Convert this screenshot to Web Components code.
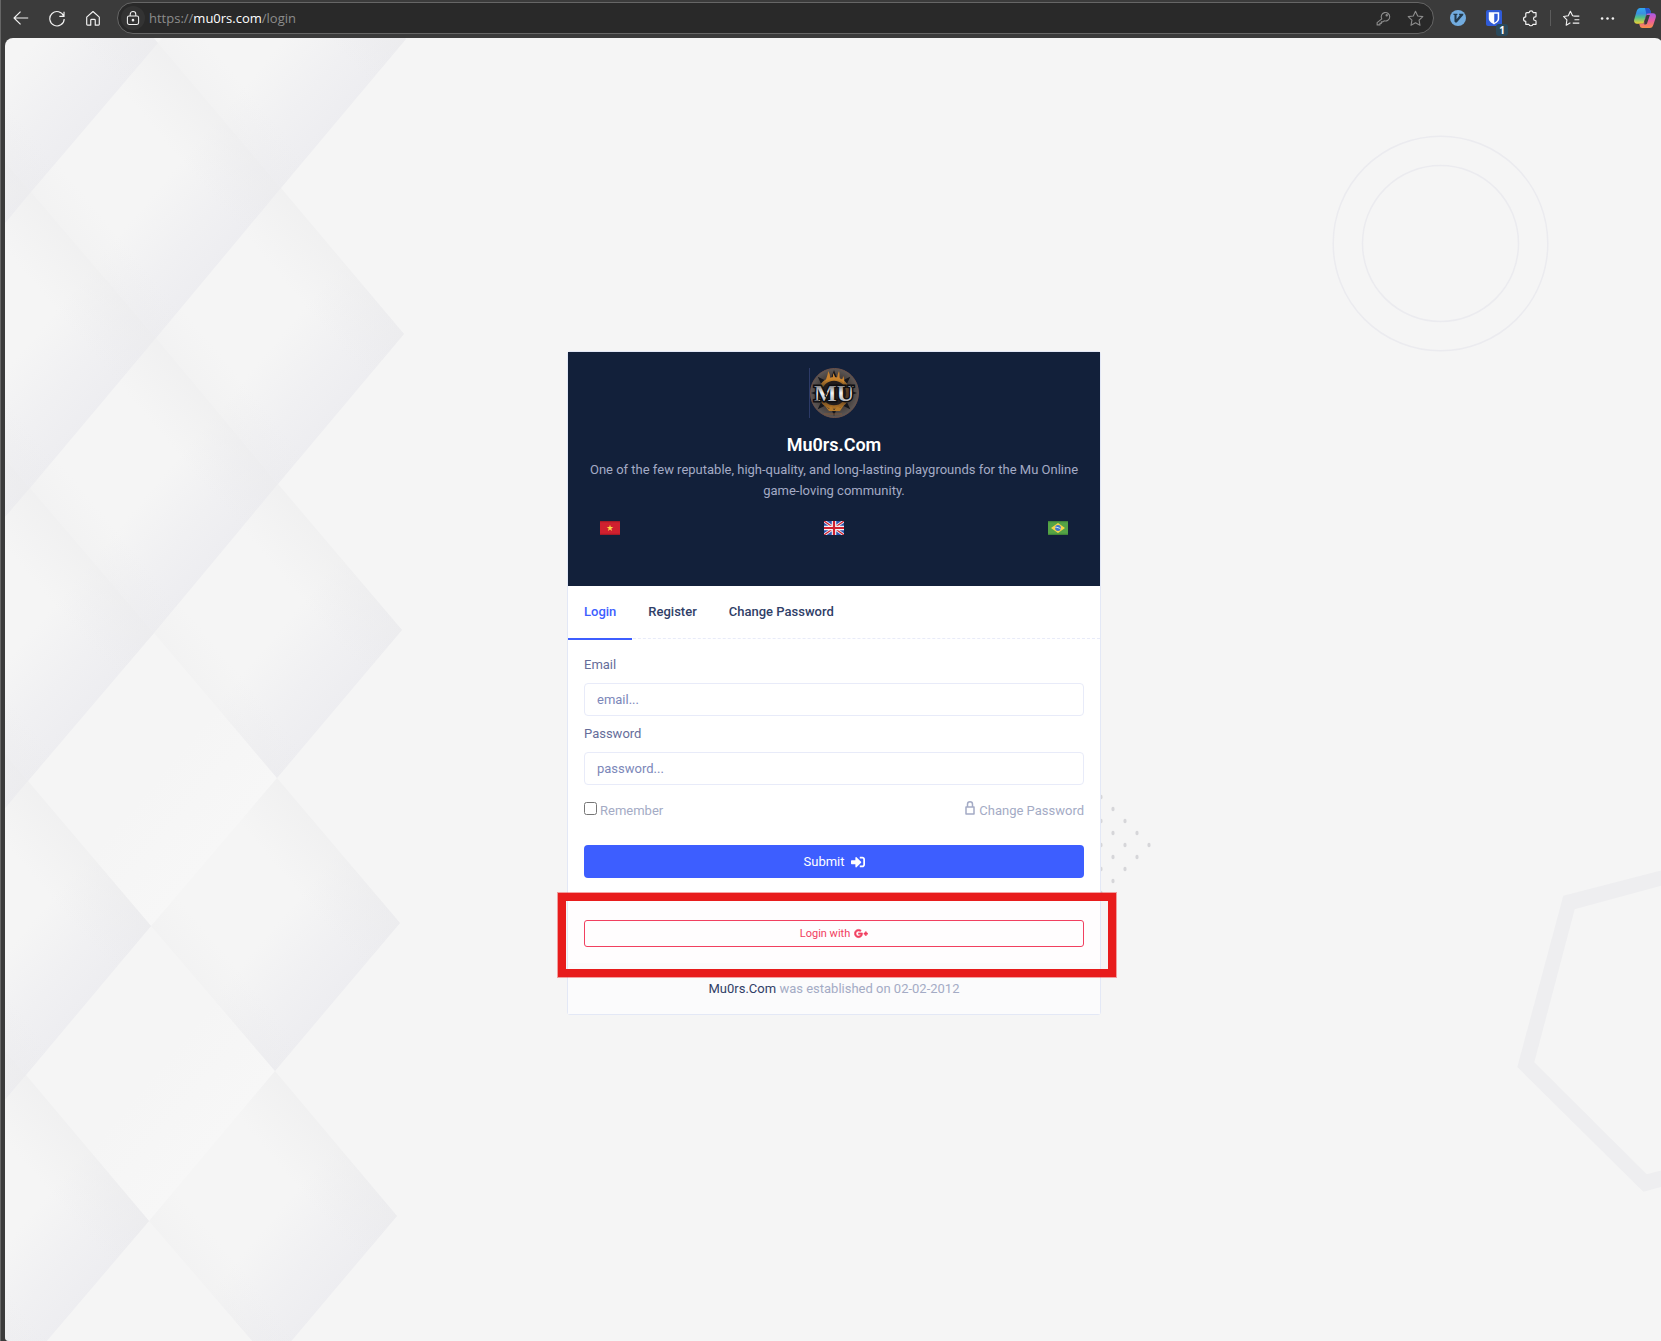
<!DOCTYPE html>
<html lang="en">
<head>
<meta charset="utf-8">
<meta name="viewport" content="width=device-width, initial-scale=1">
<title>Mu0rs.Com - Login</title>
<style>
  html, body { margin: 0; }
  body {
    --blue: #3d5eff;
    --navy: #12203a;
    --ink: #303e67;
    --muted: #a4abc5;
    --label: #656d9a;
    --line: #e8ebf9;
    --red: #f14060;
    min-height: 100vh;
    overflow: hidden;
    background: #3b3b3b;
    font: 400 13px/20px Roboto, "Liberation Sans", sans-serif;
  }
</style>
</head>
<body>
<app-window>
  <browser-toolbar slot="toolbar" scheme="https://" host="mu0rs.com" path="/login"></browser-toolbar>
  <login-card>
    <card-header slot="header" title-text="Mu0rs.Com">
      One of the few reputable, high-quality, and long-lasting playgrounds for the Mu Online game-loving community.
    </card-header>
    <tab-strip slot="tabs" items="Login,Register,Change Password" active="0"></tab-strip>
    <login-form slot="form"></login-form>
    <social-login slot="social"></social-login>
    <card-footer slot="footer" brand="Mu0rs.Com">was established on 02-02-2012</card-footer>
  </login-card>
</app-window>

<script>
const ICONS = {
  back: ['0 0 20 20', '<path d="M18 10H2.5M9.5 3 2.3 10l7.200 7" />'],
  reload: ['0 0 20 20', '<path d="M17.500 8A8 8 0 1 0 18 11M17.800 3v5.200h-5.200" />'],
  home: ['0 0 20 20', '<path d="M3 9 10 2.800 17 9v8a1 1 0 0 1-1 1h-3.500v-5.500a1 1 0 0 0-1-1h-3a1 1 0 0 0-1 1V18H4a1 1 0 0 1-1-1z" />'],
  lock: ['0 0 20 20', '<rect x="3" y="7.500" width="14" height="10.500" rx="2"/><path d="M6.500 7.500V5.500a3.500 3.500 0 0 1 7 0v2"/><circle cx="10" cy="12.700" r="1" fill="currentColor"/>'],
  key: ['0 0 20 20', '<path d="M8 10.500a5 5 0 1 1 2.700 2.200L9.200 14H7.500v1.700H5.800v1.800H2.500v-2.700z"/><circle cx="13.800" cy="6.200" r=".8"/>'],
  star: ['0 0 20 20', '<path d="m10 1.500 2.600 5.500 6 .8-4.400 4.200 1.100 6-5.300-2.900L4.700 18l1.100-6L1.400 7.800l6-.8z"/>'],
  puzzle: ['0 0 20 20', '<path d="M6.500 4H9a2.300 2.300 0 0 1 4.500 0h3.200v4a.8.8 0 0 1-.8.8 2 2 0 0 0 0 4 .8.800 0 0 1 .8.8V17h-3.500a2.300 2.300 0 0 1-4.400 0H5.300v-3.300a2.500 2.500 0 0 1 0-5V5.200A1.200 1.200 0 0 1 6.500 4z"/>'],
  favorites: ['0 0 20 20', '<path d="M12.300 7.200h6.900M13.500 11.500h5.700M11.500 15.500h7.700M14 7 11.300 6.700 8.700 1.500 6.200 6.800.6 7.600l4 4-.9 6.300 5-2.800"/>'],
  more: ['0 0 20 20', '<g fill="currentColor" stroke="none"><circle cx="2.800" cy="10" r="1.700"/><circle cx="10" cy="10" r="1.700"/><circle cx="17.200" cy="10" r="1.700"/></g>'],
  vimium: ['0 0 20 20', '<g stroke="none"><circle cx="10" cy="10" r="10" fill="#72acdf"/><path d="M4.200 4.700h5v1.400l-1 .3v5.200l4.200-5.200-1-.3V4.700h5.200v1.600l-8.200 9.200H6.600l-1-1V6.300l-1.400-.3z" fill="#233a4c"/></g>'],
  bitwarden: ['0 0 20 20', '<g stroke="none"><rect width="20" height="20" rx="2.500" fill="#2f5bd8"/><path d="M3.500 2.700h13V11c0 3-3.500 5.500-6.500 7-3-1.500-6.500-4-6.500-7z" fill="#fff"/><path d="M10.300 4.600h4.300v6.300c0 2-2 3.600-4.300 5z" fill="#2f5bd8"/></g>'],
  copilot: ['0 0 22 20', `
    <defs>
      <linearGradient id="a" x1="0" y1="0" x2="0" y2="1"><stop offset="0" stop-color="#31a8ee"/><stop offset=".35" stop-color="#3b8fe0"/><stop offset=".6" stop-color="#4fc08a"/><stop offset="1" stop-color="#f0d232"/></linearGradient>
      <linearGradient id="b" x1="0" y1="0" x2="0" y2="1"><stop offset="0" stop-color="#a45be8"/><stop offset=".5" stop-color="#e85aa0"/><stop offset="1" stop-color="#fa9048"/></linearGradient>
    </defs>
    <g stroke="none">
      <path d="M6.300 0h7.200c1.600 0 2.300 1 2.700 2.300l.9 2.900h-2c-1.600 0-2.600.8-3.100 2.400L10 14.200c-.4 1-1 1.500-2.200 1.500H3c-2.600 0-3.400-2-2.700-4.500L2.600 3.300C3.200 1.300 4.300 0 6.300 0z" fill="url(#a)"/>
      <path d="M11 0h2.500c1.600 0 2.300 1 2.700 2.300l.9 2.900h-2c-1.200 0-2 .4-2.600 1.400z" fill="#2454d0"/>
      <path d="M15.700 20H8.500c-1.600 0-2.300-1-2.700-2.300l-.6-2h2.700c1.200 0 1.800-.5 2.200-1.500L12 7.600c.5-1.600 1.500-2.400 3.100-2.400H19c2.600 0 3.400 2 2.700 4.500l-2.300 7c-.6 2-1.700 3.300-3.700 3.300z" fill="url(#b)"/>
      <path d="m10.300 13.600 2.200-6.700h3.400l-2.800 8.300c-.4 1-1.500 1.300-2.800 1.300z" fill="#3b3b3b"/>
    </g>`],
  padlock: ['0 0 10 14', '<path stroke-width="1.500" d="M1 6h8v7H1zM2.500 6V3.300a2.500 2.500 0 0 1 5 0V6"/>'],
  signin: ['0 0 512 512', '<path fill="currentColor" stroke="none" d="M416 448h-84c-6.600 0-12-5.400-12-12v-40c0-6.600 5.400-12 12-12h84c17.700 0 32-14.300 32-32V160c0-17.700-14.300-32-32-32h-84c-6.600 0-12-5.400-12-12V76c0-6.600 5.400-12 12-12h84c53 0 96 43 96 96v192c0 53-43 96-96 96zm-47-201L201 79c-15-15-41-4.500-41 17v96H24c-13.300 0-24 10.700-24 24v96c0 13.300 10.700 24 24 24h136v96c0 21.500 26 32 41 17l168-168c9.300-9.400 9.300-24.600 0-34z"/>'],
  gplus: ['0 0 640 512', '<path fill="currentColor" stroke-width="28" d="M386.061 228.496c1.834 9.692 3.143 19.384 3.143 31.956C389.204 370.205 315.599 448 204.800 448c-106.084 0-192-85.915-192-192s85.916-192 192-192c51.864 0 95.083 18.859 128.611 50.292l-52.126 50.030c-14.145-13.621-39.028-29.599-76.485-29.599-65.484 0-118.920 54.221-118.920 121.277 0 67.056 53.436 121.277 118.920 121.277 75.961 0 104.513-54.745 108.965-82.773H204.800v-66.009h181.261zm185.406 6.437V179.200h-56.001v55.733h-55.733v56.001h55.733v55.733h56.001v-55.733H627.200v-56.001h-55.733z"/>'],
  vn: ['0 0 20 14', '<g stroke="none"><path fill="#d0202f" d="M0 0h20v14H0z"/><path fill="#f9d548" d="m10 3.700.8 2.400h2.500l-2 1.500.8 2.400-2.100-1.500L7.900 10l.8-2.400-2-1.500h2.500z"/></g><path stroke="#a81a26" d="M0 .5h20M0 13.500h20"/>'],
  gb: ['0 0 20 14', '<path fill="#2a55b0" stroke="none" d="M0 0h20v14H0z"/><path stroke="#f1f1f4" stroke-width="3" d="m0 0 20 14M20 0 0 14"/><path stroke="#d0202f" d="m0 0 20 14M20 0 0 14"/><path stroke="#f1f1f4" stroke-width="4.500" d="M10 0v14M0 7h20"/><path stroke="#d0202f" stroke-width="2.200" d="M10 0v14M0 7h20"/>'],
  br: ['0 0 20 14', '<g stroke="none"><path fill="#55a446" d="M0 0h20v14H0z"/><path fill="#f9d548" d="m10 2 7 5-7 5-7-5z"/><circle cx="10" cy="7" r="2.900" fill="#3f77c9"/></g><path stroke="#e8f0f4" stroke-width=".9" d="M7.300 6.200c2 0 4 .6 5.400 1.900"/><path stroke="#41853a" d="M0 .5h20M0 13.500h20"/>']
};

class UiIcon extends HTMLElement {
  connectedCallback() {
    const [box, shape] = ICONS[this.getAttribute('name')];
    const w = this.getAttribute('w') || 18;
    const h = this.getAttribute('h') || w;
    this.attachShadow({ mode: 'open' });
    this.shadowRoot.innerHTML = `
      <style>
        :host { display: inline-block; line-height: 0; }
        svg { fill: none; stroke: currentColor; stroke-linejoin: round; }
      </style>
      <svg width="${w}" height="${h}" viewBox="${box}" stroke-width="1.300" aria-hidden="true">${shape}</svg>
    `;
  }
}
customElements.define('ui-icon', UiIcon);

class AppWindow extends HTMLElement {
  connectedCallback() {
    this.attachShadow({ mode: 'open' });
    this.shadowRoot.innerHTML = `
      <style>
        :host {
          display: flex;
          flex-direction: column;
          min-height: 100vh;
          margin-right: -2px;
          box-sizing: border-box;
          border-left: 1px solid #666;
        }
        main {
          position: relative;
          flex: 1;
          display: flex;
          align-items: center;
          justify-content: center;
          margin-left: 4px;
          padding-bottom: 14px;
          overflow: hidden;
          border-radius: 8px 8px 0 4px;
          background: #f5f5f5;
        }
      </style>
      <slot name="toolbar"></slot>
      <main>
        <page-backdrop></page-backdrop>
        <slot></slot>
      </main>
    `;
  }
}
customElements.define('app-window', AppWindow);

class BrowserToolbar extends HTMLElement {
  connectedCallback() {
    const part = name => this.getAttribute(name);
    this.attachShadow({ mode: 'open' });
    this.shadowRoot.innerHTML = `
      <style>
        :host {
          display: flex;
          align-items: center;
          padding: 2px 0 4px 2px;
          color: #f2f2f2;
        }
        button {
          position: relative;
          display: grid;
          place-items: center;
          width: 36px;
          height: 32px;
          padding: 0;
          border: 0;
          background: none;
          color: inherit;
        }
        .address {
          flex: 1;
          display: flex;
          align-items: center;
          box-sizing: border-box;
          height: 32px;
          margin: 0 6px;
          padding: 0 2px 0 3px;
          border: 1px solid #666;
          border-radius: 16px;
          background: #292929;
          color: #8c8c8c;
        }
        .address button { width: 32px; height: 30px; }
        .address .site {
          width: 24px;
          height: 24px;
          border-radius: 12px;
          background: #333;
          color: #f2f2f2;
        }
        .url {
          flex: 1;
          margin-left: 4px;
          font: 13px/20px "Open Sans", "Noto Sans", sans-serif;
        }
        .url b { font-weight: 400; color: #fff; }
        .sep { width: 1px; height: 16px; margin: 0 2px; background: #5c5c5c; }
        .badge {
          position: absolute;
          right: 4px;
          bottom: -2px;
          width: 12px;
          height: 12px;
          border-radius: 3px;
          background: #2b4a5c;
          color: #fff;
          font: 700 10px/12px "Open Sans", sans-serif;
        }
        .last { margin-left: 2px; }
      </style>
      <button aria-label="Back"><ui-icon name="back"></ui-icon></button>
      <button aria-label="Refresh"><ui-icon name="reload"></ui-icon></button>
      <button aria-label="Home"><ui-icon name="home"></ui-icon></button>
      <div class="address">
        <button class="site" aria-label="Site information"><ui-icon name="lock" w="16"></ui-icon></button>
        <span class="url">${part('scheme')}<b>${part('host')}</b>${part('path')}</span>
        <button aria-label="Saved passwords"><ui-icon name="key" w="17"></ui-icon></button>
        <button aria-label="Add to favorites"><ui-icon name="star" w="17"></ui-icon></button>
      </div>
      <button aria-label="Vimium"><ui-icon name="vimium" w="16"></ui-icon></button>
      <button aria-label="Bitwarden"><ui-icon name="bitwarden" w="16"></ui-icon><span class="badge">1</span></button>
      <button aria-label="Extensions"><ui-icon name="puzzle"></ui-icon></button>
      <span class="sep"></span>
      <button aria-label="Favorites"><ui-icon name="favorites" w="17"></ui-icon></button>
      <button aria-label="More"><ui-icon name="more" w="15"></ui-icon></button>
      <button class="last" aria-label="Copilot"><ui-icon name="copilot" w="22" h="20"></ui-icon></button>
    `;
  }
}
customElements.define('browser-toolbar', BrowserToolbar);

// Tiles are listed as top, right, bottom, left corners.
const TILES = [
  [283, -105, 406, 39, 281, 188, 158, 43],
  [33, -102, 158, 43, 31, 192, -94, 46],
  [-94, 46, 31, 192, -94, 342, -218, 196],
  [158, 43, 281, 188, 156, 338, 31, 192],
  [31, 192, 156, 338, 30, 488, -94, 342],
  [281, 188, 404, 334, 278, 484, 156, 338],
  [156, 338, 278, 484, 154, 633, 30, 488],
  [-94, 342, 30, 488, -96, 634, -218, 488],
  [30, 488, 154, 633, 28, 781, -96, 634],
  [278, 484, 402, 630, 277, 778, 154, 633],
  [-96, 634, 28, 781, -98, 930, -220, 781],
  [28, 781, 151, 926, 26, 1075, -98, 930],
  [277, 778, 400, 923, 275, 1071, 151, 926],
  [-98, 930, 26, 1075, -100, 1224, -222, 1075],
  [26, 1075, 149, 1221, 23, 1369, -100, 1224],
  [275, 1071, 397, 1216, 272, 1364, 149, 1221]
];
const PALE_TILES = [
  [154, 633, 277, 778, 151, 926, 28, 781],
  [151, 926, 275, 1071, 149, 1221, 26, 1075]
];
const DOTS = [
  [1101, 797], [1101, 821], [1101, 845], [1101, 869], [1101, 893],
  [1113, 809], [1113, 833], [1113, 857], [1113, 881],
  [1125, 821], [1125, 845], [1125, 869],
  [1137, 833], [1137, 857], [1149, 845]
];

class PageBackdrop extends HTMLElement {
  connectedCallback() {
    const tile = (pts, fill) => `<polygon points="${pts.join(' ')}" fill="url(#${fill})"/>`;
    this.attachShadow({ mode: 'open' });
    this.shadowRoot.innerHTML = `
      <style>
        :host { position: absolute; inset: 0; }
        svg { display: block; width: 100%; height: 100%; }
      </style>
      <svg viewBox="5 38 1658 1303" preserveAspectRatio="xMidYMid slice" aria-hidden="true">
        <defs>
          <linearGradient id="se" x1=".25" y1=".25" x2=".75" y2=".75">
            <stop offset=".5" stop-color="#e9e9ee" stop-opacity="0"/>
            <stop offset=".78" stop-color="#e9e9ee" stop-opacity=".4"/>
            <stop offset="1" stop-color="#e9e9ee" stop-opacity=".65"/>
          </linearGradient>
          <linearGradient id="ne" x1=".25" y1=".75" x2=".75" y2=".25">
            <stop offset="0" stop-color="#ebebec" stop-opacity=".25"/>
            <stop offset=".2" stop-color="#ebebec" stop-opacity="0"/>
            <stop offset=".7" stop-color="#ebebec" stop-opacity="0"/>
            <stop offset="1" stop-color="#ebebec" stop-opacity=".45"/>
          </linearGradient>
          <linearGradient id="pale" x1=".25" y1=".25" x2=".75" y2=".75">
            <stop offset=".5" stop-color="#f7f7f7" stop-opacity="0"/>
            <stop offset="1" stop-color="#f7f7f7"/>
          </linearGradient>
        </defs>
        ${PALE_TILES.map(t => tile(t, 'pale')).join('')}
        ${TILES.map(t => tile(t, 'se') + tile(t, 'ne')).join('')}
        <g fill="none" stroke="#ebebef" stroke-width="1.500">
          <circle cx="1440.500" cy="243.500" r="107.300"/>
          <circle cx="1440.500" cy="243.500" r="78"/>
        </g>
        <path fill="#eeeef0" d="M1690 863 1563.300 895.700 1517.300 1067 1643.300 1191.700 1690 1179V1163L1646.700 1174.300 1534.300 1062.300 1574.700 909.300 1690 878z"/>
        <g fill="#d6d6d9">${DOTS.map(([x, y]) => `<ellipse cx="${x}" cy="${y}" rx="1.600" ry="2.200"/>`).join('')}</g>
      </svg>
    `;
  }
}
customElements.define('page-backdrop', PageBackdrop);

class LoginCard extends HTMLElement {
  connectedCallback() {
    this.attachShadow({ mode: 'open' });
    this.shadowRoot.innerHTML = `
      <style>
        :host {
          position: relative;
          display: block;
          box-sizing: border-box;
          width: 100%;
          max-width: 534px;
          border: 1px solid #e3e8f6;
          border-radius: 3px;
          background: #fff;
        }
      </style>
      <slot name="header"></slot>
      <slot name="tabs"></slot>
      <slot name="form"></slot>
      <slot name="social"></slot>
      <slot name="footer"></slot>
    `;
  }
}
customElements.define('login-card', LoginCard);

class BrandLogo extends HTMLElement {
  connectedCallback() {
    const spikes = [0, 45, 90, 135, 180, 225, 270, 315]
      .map(a => `<path d="m22.500 9 2.500-7 2.500 7z" transform="rotate(${a} 25 25)"/>`).join('');
    this.attachShadow({ mode: 'open' });
    this.shadowRoot.innerHTML = `
      <style>
        :host { display: block; width: 50px; height: 50px; margin: 0 auto; }
        svg { display: block; }
        text { font: 700 24px "Liberation Serif", serif; }
      </style>
      <svg width="50" height="50" viewBox="0 0 50 50" role="img" aria-label="MU">
        <defs>
          <radialGradient id="disc"><stop offset="0" stop-color="#2b2320"/><stop offset=".7" stop-color="#47403e"/><stop offset="1" stop-color="#5d5856"/></radialGradient>
          <linearGradient id="fire" x1="0" y1="0" x2="0" y2="1"><stop offset="0" stop-color="#c9862c"/><stop offset=".35" stop-color="#5c3f22"/><stop offset=".7" stop-color="#4d3721"/><stop offset="1" stop-color="#a86e25"/></linearGradient>
          <linearGradient id="steel" x1="0" y1="0" x2="0" y2="1"><stop offset=".2" stop-color="#77797d"/><stop offset=".5" stop-color="#f4f4f6"/><stop offset=".9" stop-color="#a0a2a6"/></linearGradient>
        </defs>
        <path d="M.5 0v50" stroke="#2c3a67"/>
        <ellipse cx="25.500" cy="25" rx="24" ry="24.500" fill="url(#disc)" stroke="#6d5148"/>
        <g fill="#15161b">${spikes}</g>
        <circle cx="25" cy="25" r="14" fill="#211c1c" stroke="url(#fire)" stroke-width="3.500"/>
        <path d="M17 13c0-4 2-5 2-10 2 3 2 4 2 7l2 1c1-2 1-3 1-6 2 3 2 4 3 6 2-2 1-4 3-8 1 3 0 5 1 8 2 1 3 0 3-3 2 3 1 6 1 7-3-3-6-4-9-4s-6 0-9 2z" fill="#c98330"/>
        <path d="m16 38 4 3 2-3 3 4 3-3 3 1 4-3-4 6H20z" fill="#b3792a"/>
        <path d="M15 46h18" stroke="#7d563a"/>
        <text x="25" y="33" text-anchor="middle" fill="url(#steel)" stroke="#0d0d10" stroke-width="3" paint-order="stroke">MU</text>
        <path d="m14 19 4 6-2 3 3 3M5 33h5M41 17l3 3" fill="none" stroke="#1a1a1e" stroke-width="1.200"/>
      </svg>
    `;
  }
}
customElements.define('brand-logo', BrandLogo);

class CardHeader extends HTMLElement {
  connectedCallback() {
    this.attachShadow({ mode: 'open' });
    this.shadowRoot.innerHTML = `
      <style>
        :host {
          display: block;
          padding: 16px 16px 51px;
          background: var(--navy);
          color: var(--muted);
          text-align: center;
        }
        h1 {
          margin: 16px 0 3px;
          color: #fff;
          font-size: 18px;
          font-weight: 600;
          line-height: 22px;
        }
        p { margin: 0; line-height: 21px; }
        nav {
          display: flex;
          justify-content: space-between;
          margin: 20px 16px 0;
        }
        a { display: block; line-height: 0; }
      </style>
      <brand-logo></brand-logo>
      <h1>${this.getAttribute('title-text')}</h1>
      <p><slot></slot></p>
      <nav>
        <a href="#vi" aria-label="Tiếng Việt"><ui-icon name="vn" w="20" h="14"></ui-icon></a>
        <a href="#en" aria-label="English"><ui-icon name="gb" w="20" h="14"></ui-icon></a>
        <a href="#pt" aria-label="Português"><ui-icon name="br" w="20" h="14"></ui-icon></a>
      </nav>
    `;
  }
}
customElements.define('card-header', CardHeader);

class TabStrip extends HTMLElement {
  connectedCallback() {
    const active = Number(this.getAttribute('active'));
    const tabs = this.getAttribute('items').split(',').map((label, i) =>
      `<a href="#tab-${i}" class="${i === active ? 'active' : ''}">${label}</a>`);
    this.attachShadow({ mode: 'open' });
    this.shadowRoot.innerHTML = `
      <style>
        :host {
          display: flex;
          border-bottom: 1px dashed var(--line);
        }
        a {
          margin-bottom: -2px;
          padding: 16px;
          border-bottom: 2px solid transparent;
          color: var(--ink);
          font-weight: 500;
          text-decoration: none;
        }
        .active { color: var(--blue); border-color: var(--blue); }
      </style>
      ${tabs.join('')}
    `;
  }
}
customElements.define('tab-strip', TabStrip);

class FormField extends HTMLElement {
  connectedCallback() {
    this.attachShadow({ mode: 'open' });
    this.shadowRoot.innerHTML = `
      <style>
        :host { display: block; color: var(--label); }
        label { display: block; margin-bottom: 8px; }
        input {
          display: block;
          box-sizing: border-box;
          width: 100%;
          height: 33px;
          padding: 0 12px;
          border: 1px solid var(--line);
          border-radius: 4px;
          background: #fff;
          color: inherit;
          font: inherit;
        }
        input::placeholder { color: #7c87b9; opacity: 1; }
      </style>
      <label for="field">${this.getAttribute('label')}</label>
      <input id="field" type="${this.getAttribute('type')}" placeholder="${this.getAttribute('placeholder')}">
    `;
  }
}
customElements.define('form-field', FormField);

class LoginForm extends HTMLElement {
  connectedCallback() {
    this.attachShadow({ mode: 'open' });
    this.shadowRoot.innerHTML = `
      <style>
        :host { display: block; padding: 16px; }
        form { display: grid; gap: 8px; margin: 0; }
        .row {
          display: flex;
          justify-content: space-between;
          margin: 8px 0 16px;
          color: var(--muted);
        }
        .row label { display: flex; gap: 3px; }
        .row input { width: 13px; height: 13px; margin: 1px 0 0; }
        a { display: flex; gap: 4px; color: inherit; text-decoration: none; }
        button {
          display: flex;
          align-items: center;
          justify-content: center;
          gap: 6px;
          box-sizing: border-box;
          height: 33px;
          padding: 1px 0 0;
          border: 0;
          border-radius: 4px;
          background: var(--blue);
          color: #fff;
          font: inherit;
        }
      </style>
      <form>
        <form-field label="Email" type="email" placeholder="email..."></form-field>
        <form-field label="Password" type="password" placeholder="password..."></form-field>
        <div class="row">
          <label for="remember"><input id="remember" type="checkbox">Remember</label>
          <a href="#change"><ui-icon name="padlock" w="10" h="14"></ui-icon>Change Password</a>
        </div>
        <button type="submit">Submit <ui-icon name="signin" w="14"></ui-icon></button>
      </form>
    `;
  }
}
customElements.define('login-form', LoginForm);

class SocialLogin extends HTMLElement {
  connectedCallback() {
    this.attachShadow({ mode: 'open' });
    this.shadowRoot.innerHTML = `
      <style>
        :host {
          position: relative;
          display: block;
          padding: 26px 16px 16px;
          background: #fffdfe;
        }
        button {
          display: flex;
          align-items: center;
          justify-content: center;
          gap: 4px;
          box-sizing: border-box;
          width: 100%;
          height: 27px;
          padding: 1px 0 0;
          border: 1px solid var(--red);
          border-radius: 3px;
          background: #fffdfe;
          color: var(--red);
          font: inherit;
          font-size: 11px;
        }
        .highlight {
          position: absolute;
          z-index: 1;
          inset: -1px -16px -14px -10px;
          border: 8px solid #e81c1c;
          box-shadow: 0 0 0 1px rgba(232, 28, 28, .4);
          pointer-events: none;
        }
      </style>
      <button type="button">Login with <ui-icon name="gplus" w="14" h="11"></ui-icon></button>
      <div class="highlight"></div>
    `;
  }
}
customElements.define('social-login', SocialLogin);

class CardFooter extends HTMLElement {
  connectedCallback() {
    this.attachShadow({ mode: 'open' });
    this.shadowRoot.innerHTML = `
      <style>
        :host {
          display: block;
          padding: 16px 16px 15px;
          background: #fbfbfc;
          color: var(--muted);
          text-align: center;
        }
        a { color: var(--ink); text-decoration: none; }
      </style>
      <a href="#home">${this.getAttribute('brand')}</a> <slot></slot>
    `;
  }
}
customElements.define('card-footer', CardFooter);
</script>
</body>
</html>
